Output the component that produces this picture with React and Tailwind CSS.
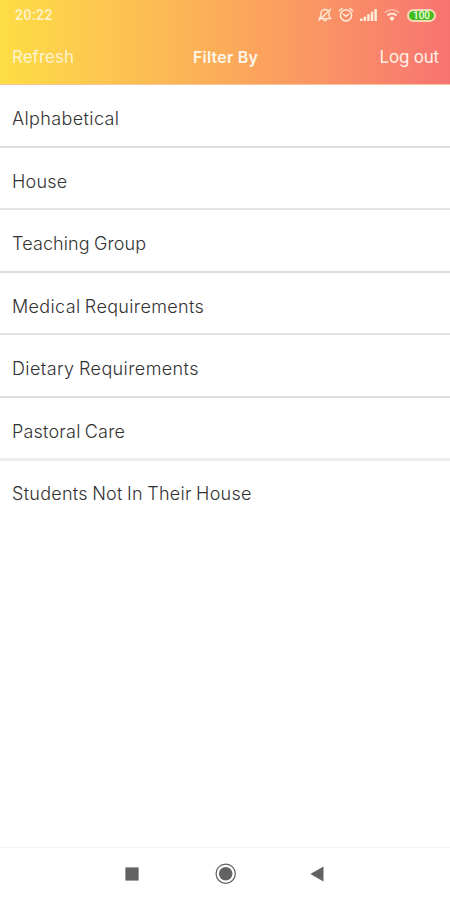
import React from "react";

const filters = [
  { label: "Alphabetical", style: "h-[62.5px] pt-[7px] tracking-[0.38px] border-b-2 border-[#dedede]" },
  { label: "House", style: "h-[62.5px] pt-[7px] tracking-[0.2px] border-b-2 border-[#e2e2e2]" },
  { label: "Teaching Group", style: "h-[62.5px] pt-[7px] tracking-[0.12px] border-b-2 border-[#dedede]" },
  { label: "Medical Requirements", style: "h-[62.5px] pt-[7px] tracking-[0.35px] border-b-2 border-[#e2e2e2]" },
  { label: "Dietary Requirements", style: "h-[62.5px] pt-[7px] tracking-[0.4px] border-b-2 border-[#dedede]" },
  { label: "Pastoral Care", style: "h-[63.5px] pt-[7px] tracking-[0.2px] border-b-3 border-[#ededed]" },
  { label: "Students Not In Their House", style: "h-[62.5px] pt-[3px] tracking-[0.27px]" },
];

function StatusIcons() {
  return (
    <div className="flex items-center text-[#fff0dc]">
      {/* Muted bell */}
      <svg width="16" height="16" viewBox="0 0 16 16" fill="none" stroke="currentColor" strokeWidth="1.3">
        <path d="M2.2 11.6h11.6l-1.7-2.4V6.6a4.1 4.1 0 0 0-8.2 0v2.6z" strokeLinejoin="round" />
        <path d="M6.3 12.6a1.8 1.8 0 0 0 3.4 0M2 13.2 13.8 2.2" strokeLinecap="round" />
      </svg>
      {/* Alarm */}
      <svg className="ml-[5px]" width="16" height="16" viewBox="0 0 16 16" fill="none" stroke="currentColor" strokeWidth="1.4">
        <circle cx="8" cy="8.4" r="5.6" />
        <path d="M5.3 7.3 8 9.4l2.8-2.2M1.2 3.9 4 1.4M14.8 3.9 12 1.4" strokeLinecap="round" />
      </svg>
      {/* Signal */}
      <svg className="ml-[6px]" width="17" height="14" viewBox="0 0 17 14" fill="currentColor">
        <rect x="0" y="10.5" width="2.5" height="2.5" rx="0.6" />
        <rect x="3.6" y="8.6" width="2.5" height="4.4" rx="0.6" />
        <rect x="7.2" y="6.2" width="2.5" height="6.8" rx="0.6" />
        <rect x="10.8" y="3.8" width="2.5" height="9.2" rx="0.6" />
        <rect x="14.4" y="1" width="2.5" height="12" rx="0.6" />
      </svg>
      {/* Wifi */}
      <svg className="ml-[7px]" width="16" height="14" viewBox="0 0 16 14" fill="none" stroke="currentColor">
        <path d="M.8 4.8a10.2 10.2 0 0 1 14.4 0" strokeWidth="1.7" opacity="0.45" />
        <path d="M3.5 7.5a6.4 6.4 0 0 1 9 0" strokeWidth="1.8" />
        <path d="m5.4 10 2.6 3.2 2.6-3.2a3.8 3.8 0 0 0-5.2 0z" fill="currentColor" stroke="none" />
      </svg>
      <div className="ml-[7px] flex h-[13px] w-[29px] items-center justify-center rounded-full border-2 border-[#f9d8b8] bg-[#43bd1d] pt-px font-['Roboto',sans-serif] text-[10px] font-medium leading-[10px] text-[#f2ffe5]">
        100
      </div>
    </div>
  );
}

export default function App() {
  return (
    <div className="flex h-[900px] w-[450px] flex-col overflow-hidden bg-white font-['Inter','Roboto',sans-serif]">
      <header className="h-[85px] shrink-0 border-b border-[#f3c4a0] bg-linear-to-r from-[#fddd44] via-[#fbab59] to-[#f77370]">
        <div className="flex h-[30px] items-center justify-between pl-[15px] pr-[14px]">
          <span className="font-['Roboto',sans-serif] text-sm font-medium tracking-[0.5px] text-[#fff3cf]">
            20:22
          </span>
          <StatusIcons />
        </div>
        <div className="grid h-[54px] grid-cols-3 items-center pl-3 pr-[11px]">
          <button className="pt-[2px] text-left text-[17px] font-normal text-[#fff3d0]">Refresh</button>
          <h1 className="text-center text-base font-semibold tracking-[0.2px] text-[#fff6ea]">Filter By</h1>
          <button className="pt-[2px] text-right text-[17px] font-normal tracking-[-0.2px] text-[#fff0e6]">Log out</button>
        </div>
      </header>

      <ul className="flex-1">
        {filters.map(({ label, style }) => (
          <li
            key={label}
            className={`flex items-center pl-3 text-[18px] font-light text-[#333333] [word-spacing:-1px] ${style}`}
          >
            {label}
          </li>
        ))}
      </ul>

      {/* System navigation */}
      <nav className="flex h-[53px] shrink-0 items-center border-t border-[#f3f3f3] pl-[125px] text-[#626262]">
        <svg width="14" height="14" viewBox="0 0 14 14" fill="currentColor">
          <rect x="0.4" y="0.4" width="13.2" height="13.2" />
        </svg>
        <svg className="ml-[76px]" width="22" height="22" viewBox="0 0 22 22">
          <circle cx="10.7" cy="10.7" r="9.6" fill="none" stroke="currentColor" strokeWidth="1.2" />
          <circle cx="10.7" cy="10.7" r="6.8" fill="currentColor" />
        </svg>
        <svg className="ml-[73px]" width="14" height="16" viewBox="0 0 14 16" fill="currentColor">
          <path d="M13.5.5v15L.4 8z" />
        </svg>
      </nav>
    </div>
  );
}
